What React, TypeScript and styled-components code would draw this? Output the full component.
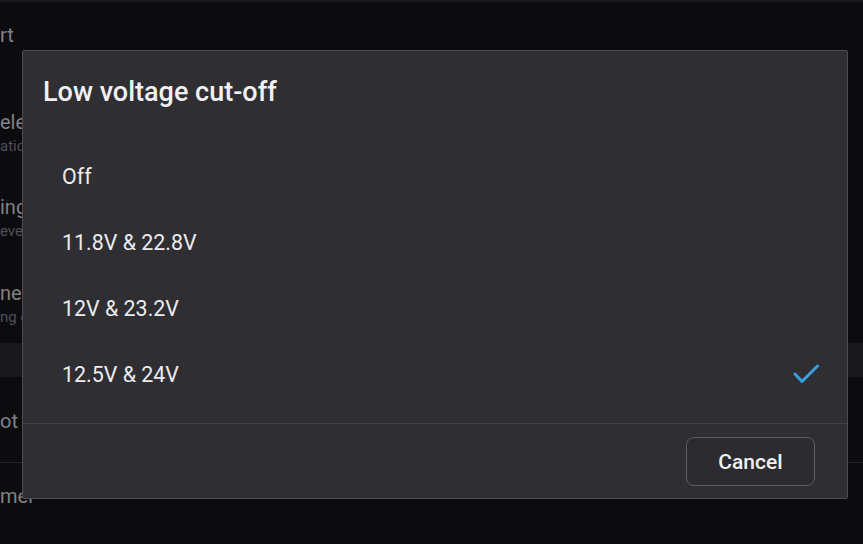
import React from "react";
import styled, { createGlobalStyle } from "styled-components";

const Global = createGlobalStyle`
  html, body { margin: 0; padding: 0; background: #0c0c0e; }
  body { font-family: Roboto, "Noto Sans", "Liberation Sans", sans-serif; overflow: hidden; }
  * { box-sizing: border-box; }
`;

const Screen = styled.div`
  position: relative;
  width: 863px;
  height: 544px;
  overflow: hidden;
  background: #0c0c0e;
  border-top: 2px solid #1c1c1e;
`;

const List = styled.div`
  display: flex;
  flex-direction: column;
`;

const Row = styled.div<{ $h: number; $top: number; $divider?: boolean }>`
  height: ${(p) => p.$h}px;
  padding-top: ${(p) => p.$top}px;
  display: flex;
  flex-direction: column;
  gap: 4px;
  border-bottom: ${(p) => (p.$divider ? "1px solid #242426" : "none")};
`;

const Band = styled.div`
  height: 34px;
  background: #19191b;
`;

const RowTitle = styled.div`
  font-size: 20px;
  line-height: 20px;
  color: #828286;
  white-space: nowrap;
`;

const RowSub = styled.div`
  font-size: 15px;
  line-height: 20px;
  color: #505054;
  white-space: nowrap;
`;

const Dialog = styled.div`
  position: absolute;
  left: 22px;
  top: 48px;
  width: 826px;
  height: 449px;
  background: #2f2e33;
  border: 1px solid #4d4c51;
  border-radius: 2px;
  display: flex;
  flex-direction: column;
`;

const Title = styled.h2`
  margin: 0;
  padding: 25px 20px 0;
  font-size: 27px;
  line-height: 32px;
  font-weight: 500;
  color: #f1f1f3;
`;

const Options = styled.div`
  display: flex;
  flex-direction: column;
  padding: 35px 0 16px;
  border-bottom: 1px solid #414045;
`;

const Option = styled.div`
  height: 66px;
  display: flex;
  align-items: center;
  justify-content: space-between;
  padding: 0 28px 0 39px;
  font-size: 21.4px;
  color: #ececee;
`;

const Footer = styled.div`
  display: flex;
  justify-content: flex-end;
  padding: 13px 32px 0;
`;

const Button = styled.button`
  width: 129px;
  height: 49px;
  border: 1px solid #5e5d62;
  border-radius: 8px;
  background: #2c2b30;
  color: #f1f1f3;
  font-family: inherit;
  font-size: 21px;
  font-weight: 500;
`;

const Check = () => (
  <svg width="26" height="22" viewBox="0 0 26 22" fill="none">
    <path d="M2 11 L9 18.5 L24.5 3" stroke="#3a9fe2" strokeWidth="3" strokeLinecap="round" strokeLinejoin="round" />
  </svg>
);

const options = ["Off", "11.8V & 22.8V", "12V & 23.2V", "12.5V & 24V"];

export default function App() {
  return (
    <>
      <Global />
      <Screen>
        <List>
          <Row $h={86} $top={23}>
            <RowTitle>rt</RowTitle>
          </Row>
          <Row $h={86} $top={24}>
            <RowTitle>ele</RowTitle>
            <RowSub>atio</RowSub>
          </Row>
          <Row $h={86} $top={23}>
            <RowTitle>ing</RowTitle>
            <RowSub>eve</RowSub>
          </Row>
          <Row $h={83} $top={23}>
            <RowTitle>ner</RowTitle>
            <RowSub>ng e</RowSub>
          </Row>
          <Band />
          <Row $h={86} $top={34} $divider>
            <RowTitle>ot</RowTitle>
          </Row>
          <Row $h={66} $top={23}>
            <RowTitle>mer</RowTitle>
          </Row>
        </List>
        <Dialog>
          <Title>Low voltage cut-off</Title>
          <Options>
            {options.map((o, i) => (
              <Option key={o}>
                <span>{o}</span>
                {i === 3 && <Check />}
              </Option>
            ))}
          </Options>
          <Footer>
            <Button>Cancel</Button>
          </Footer>
        </Dialog>
      </Screen>
    </>
  );
}
